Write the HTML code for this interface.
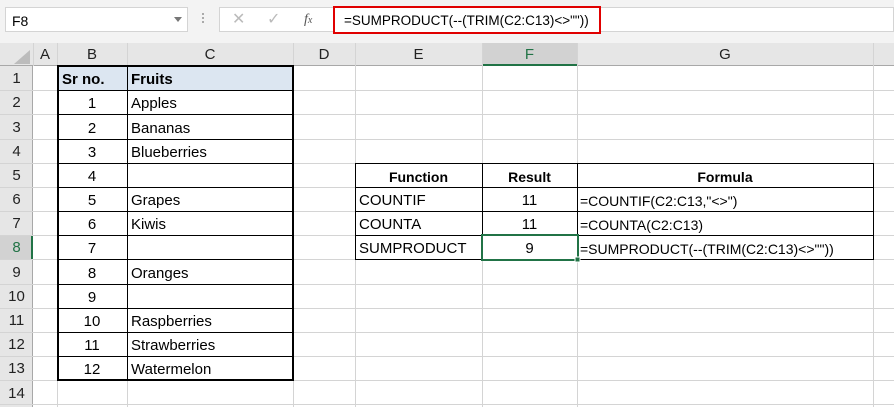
<!DOCTYPE html>
<html><head><meta charset="utf-8"><style>
*{margin:0;padding:0;box-sizing:border-box}
body{width:894px;height:407px;overflow:hidden;background:#fff;font-family:"Liberation Sans",sans-serif;position:relative}
.a{position:absolute}
.t{position:absolute;font-size:15px;line-height:24px;white-space:nowrap;color:#000;margin-top:2px}
.h{position:absolute;font-size:15px;color:#222;text-align:center;line-height:22px;margin-top:1px}
</style></head><body>
<div class="a" style="left:0;top:0;width:894px;height:43px;background:#f3f3f3"></div>
<div class="a" style="left:5px;top:7px;width:183px;height:25px;background:#fff;border:1px solid #d4d4d4"></div>
<div class="t" style="left:12px;top:8px;font-size:14px;line-height:22px">F8</div>
<div class="a" style="left:174px;top:17px;width:0;height:0;border-left:4px solid transparent;border-right:4px solid transparent;border-top:5px solid #777"></div>
<div class="a" style="left:202px;top:13px;width:2px;height:2px;background:#aaa;box-shadow:0 4px #aaa,0 8px #aaa"></div>
<div class="a" style="left:219px;top:7px;width:675px;height:25px;background:#fff;border:1px solid #d4d4d4"></div>
<div class="t" style="left:232px;top:7px;color:#bbb;font-size:16px;line-height:22px">✕</div>
<div class="t" style="left:267px;top:7px;color:#bbb;font-size:16px;line-height:22px">✓</div>
<div class="t" style="left:304px;top:7px;color:#555;font-size:14px;line-height:22px;font-family:'Liberation Serif',serif;font-style:italic">f<span style="font-size:10px">x</span></div>
<div class="a" style="left:333px;top:6px;width:268px;height:28px;border:2px solid #e00000;background:#fff"></div>
<div class="t" style="left:344px;top:7px;font-size:13.5px;line-height:24px">=SUMPRODUCT(--(TRIM(C2:C13)&lt;&gt;""))</div>

<div class="a" style="left:0;top:43px;width:894px;height:23px;background:#e6e6e6;border-bottom:1px solid #a8a8a8"></div>
<div class="a" style="left:0;top:66px;width:33px;height:341px;background:#e6e6e6;border-right:1px solid #a8a8a8"></div>
<div class="a" style="left:14px;top:50px;width:0;height:0;border-left:16px solid transparent;border-bottom:14px solid #bcbcbc"></div>
<div class="a" style="left:482px;top:43px;width:95px;height:23px;background:#d2d2d2;border-bottom:2px solid #217346"></div>
<div class="a" style="left:0;top:235px;width:33px;height:24px;background:#d2d2d2;border-right:2px solid #217346"></div>

<svg class="a" style="left:0;top:0" width="894" height="407">
<g stroke="#d4d4d4" stroke-width="1">
<line x1="33.5" y1="43" x2="33.5" y2="66"/><line x1="57.5" y1="43" x2="57.5" y2="407"/><line x1="127.5" y1="43" x2="127.5" y2="407"/><line x1="293.5" y1="43" x2="293.5" y2="407"/><line x1="355.5" y1="43" x2="355.5" y2="407"/><line x1="482.5" y1="43" x2="482.5" y2="407"/><line x1="577.5" y1="43" x2="577.5" y2="407"/><line x1="873.5" y1="43" x2="873.5" y2="407"/>
</g>
<g stroke="#d4d4d4">
<line x1="0" y1="90.5" x2="894" y2="90.5"/><line x1="0" y1="114.5" x2="894" y2="114.5"/><line x1="0" y1="139.5" x2="894" y2="139.5"/><line x1="0" y1="163.5" x2="894" y2="163.5"/><line x1="0" y1="187.5" x2="894" y2="187.5"/><line x1="0" y1="211.5" x2="894" y2="211.5"/><line x1="0" y1="235.5" x2="894" y2="235.5"/><line x1="0" y1="259.5" x2="894" y2="259.5"/><line x1="0" y1="284.5" x2="894" y2="284.5"/><line x1="0" y1="308.5" x2="894" y2="308.5"/><line x1="0" y1="332.5" x2="894" y2="332.5"/><line x1="0" y1="356.5" x2="894" y2="356.5"/><line x1="0" y1="380.5" x2="894" y2="380.5"/><line x1="0" y1="404.5" x2="894" y2="404.5"/>
</g>
<rect x="57" y="66" width="236" height="24" fill="#dce6f1"/>
<g stroke="#000" stroke-width="1">
<line x1="57" y1="90.5" x2="293" y2="90.5"/><line x1="57" y1="114.5" x2="293" y2="114.5"/><line x1="57" y1="139.5" x2="293" y2="139.5"/><line x1="57" y1="163.5" x2="293" y2="163.5"/><line x1="57" y1="187.5" x2="293" y2="187.5"/><line x1="57" y1="211.5" x2="293" y2="211.5"/><line x1="57" y1="235.5" x2="293" y2="235.5"/><line x1="57" y1="259.5" x2="293" y2="259.5"/><line x1="57" y1="284.5" x2="293" y2="284.5"/><line x1="57" y1="308.5" x2="293" y2="308.5"/><line x1="57" y1="332.5" x2="293" y2="332.5"/><line x1="57" y1="356.5" x2="293" y2="356.5"/>
<line x1="127.5" y1="66" x2="127.5" y2="380"/>
</g>
<rect x="58" y="66" width="235" height="314" fill="none" stroke="#000" stroke-width="2"/>
<g stroke="#000" stroke-width="1" fill="none">
<rect x="355.5" y="163.5" width="518" height="96"/>
<line x1="355" y1="187.5" x2="874" y2="187.5"/><line x1="355" y1="211.5" x2="874" y2="211.5"/><line x1="355" y1="235.5" x2="874" y2="235.5"/>
<line x1="482.5" y1="163" x2="482.5" y2="260"/><line x1="577.5" y1="163" x2="577.5" y2="260"/>
</g>
<rect x="482" y="235" width="96" height="25" fill="none" stroke="#217346" stroke-width="2"/>
<rect x="575" y="257" width="5" height="5" fill="#217346" stroke="#fff" stroke-width="1"/>
</svg>

<div class="h" style="left:33px;top:43px;width:24px">A</div>
<div class="h" style="left:57px;top:43px;width:70px">B</div>
<div class="h" style="left:127px;top:43px;width:166px">C</div>
<div class="h" style="left:293px;top:43px;width:62px">D</div>
<div class="h" style="left:355px;top:43px;width:127px">E</div>
<div class="h" style="left:482px;top:43px;width:95px;color:#217346">F</div>
<div class="h" style="left:577px;top:43px;width:296px">G</div>

<div class="h" style="left:0;top:67px;width:33px">1</div>
<div class="h" style="left:0;top:91px;width:33px">2</div>
<div class="h" style="left:0;top:116px;width:33px">3</div>
<div class="h" style="left:0;top:140px;width:33px">4</div>
<div class="h" style="left:0;top:164px;width:33px">5</div>
<div class="h" style="left:0;top:188px;width:33px">6</div>
<div class="h" style="left:0;top:212px;width:33px">7</div>
<div class="h" style="left:0;top:236px;width:33px;color:#217346">8</div>
<div class="h" style="left:0;top:261px;width:33px">9</div>
<div class="h" style="left:0;top:285px;width:33px">10</div>
<div class="h" style="left:0;top:309px;width:33px">11</div>
<div class="h" style="left:0;top:333px;width:33px">12</div>
<div class="h" style="left:0;top:357px;width:33px">13</div>
<div class="h" style="left:0;top:382px;width:33px">14</div>

<div class="t" style="left:62px;top:66px;font-weight:bold">Sr no.</div>
<div class="t" style="left:131px;top:66px;font-weight:bold">Fruits</div>
<div class="t" style="left:57px;top:90px;width:70px;text-align:center">1</div>
<div class="t" style="left:57px;top:115px;width:70px;text-align:center">2</div>
<div class="t" style="left:57px;top:139px;width:70px;text-align:center">3</div>
<div class="t" style="left:57px;top:163px;width:70px;text-align:center">4</div>
<div class="t" style="left:57px;top:187px;width:70px;text-align:center">5</div>
<div class="t" style="left:57px;top:211px;width:70px;text-align:center">6</div>
<div class="t" style="left:57px;top:235px;width:70px;text-align:center">7</div>
<div class="t" style="left:57px;top:260px;width:70px;text-align:center">8</div>
<div class="t" style="left:57px;top:284px;width:70px;text-align:center">9</div>
<div class="t" style="left:57px;top:308px;width:70px;text-align:center">10</div>
<div class="t" style="left:57px;top:332px;width:70px;text-align:center">11</div>
<div class="t" style="left:57px;top:356px;width:70px;text-align:center">12</div>
<div class="t" style="left:131px;top:90px">Apples</div>
<div class="t" style="left:131px;top:115px">Bananas</div>
<div class="t" style="left:131px;top:139px">Blueberries</div>
<div class="t" style="left:131px;top:187px">Grapes</div>
<div class="t" style="left:131px;top:211px">Kiwis</div>
<div class="t" style="left:131px;top:260px">Oranges</div>
<div class="t" style="left:131px;top:308px">Raspberries</div>
<div class="t" style="left:131px;top:332px">Strawberries</div>
<div class="t" style="left:131px;top:356px">Watermelon</div>

<div class="t" style="left:355px;top:163px;width:127px;text-align:center;font-weight:bold;font-size:14px">Function</div>
<div class="t" style="left:482px;top:163px;width:95px;text-align:center;font-weight:bold;font-size:14px">Result</div>
<div class="t" style="left:577px;top:163px;width:296px;text-align:center;font-weight:bold;font-size:14px">Formula</div>
<div class="t" style="left:359px;top:187px">COUNTIF</div>
<div class="t" style="left:359px;top:211px">COUNTA</div>
<div class="t" style="left:359px;top:235px">SUMPRODUCT</div>
<div class="t" style="left:482px;top:187px;width:95px;text-align:center">11</div>
<div class="t" style="left:482px;top:211px;width:95px;text-align:center">11</div>
<div class="t" style="left:482px;top:235px;width:95px;text-align:center">9</div>
<div class="t" style="left:580px;top:187px;font-size:14px">=COUNTIF(C2:C13,"&lt;&gt;")</div>
<div class="t" style="left:580px;top:211px;font-size:14px">=COUNTA(C2:C13)</div>
<div class="t" style="left:580px;top:235px;font-size:14px">=SUMPRODUCT(--(TRIM(C2:C13)&lt;&gt;""))</div>
</body></html>
